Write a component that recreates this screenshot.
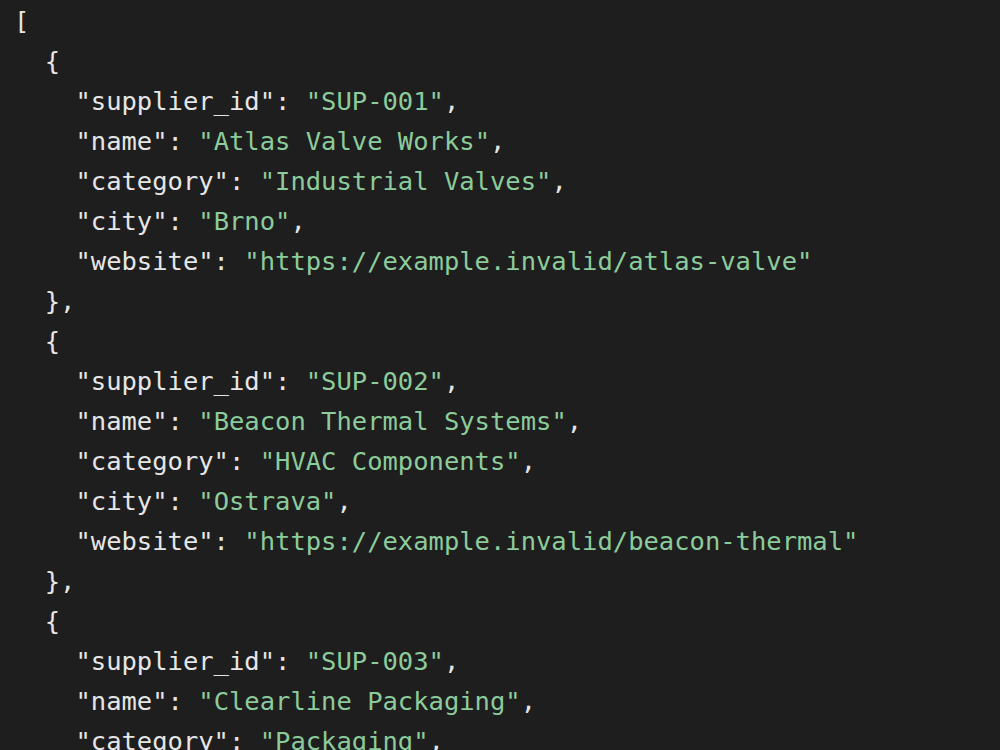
const suppliers = [
  {
    supplier_id: "SUP-001",
    name: "Atlas Valve Works",
    category: "Industrial Valves",
    city: "Brno",
    website: "https://example.invalid/atlas-valve",
  },
  {
    supplier_id: "SUP-002",
    name: "Beacon Thermal Systems",
    category: "HVAC Components",
    city: "Ostrava",
    website: "https://example.invalid/beacon-thermal",
  },
  {
    supplier_id: "SUP-003",
    name: "Clearline Packaging",
    category: "Packaging",
    city: "Plzeň",
    website: "https://example.invalid/clearline",
  },
];

const Line = ({ indent, children }: { indent: number; children: React.ReactNode }) => (
  <div className="whitespace-pre h-[40px] leading-[40px]">
    {"  ".repeat(indent)}
    {children}
  </div>
);

const App = () => {
  return (
    <div
      className="w-[1000px] h-[750px] overflow-hidden bg-[#1e1e1e] text-[#e6e6e6] pl-[14px] pt-[1px] text-[25.5px]"
      style={{ fontFamily: '"DejaVu Sans Mono", "Liberation Mono", monospace' }}
    >
      <Line indent={0}>[</Line>
      {suppliers.map((s, i) => {
        const entries = Object.entries(s);
        return (
          <div key={s.supplier_id}>
            <Line indent={1}>{"{"}</Line>
            {entries.map(([k, v], j) => (
              <Line key={k} indent={2}>
                "{k}": <span className="text-[#8ccb9b]">"{v}"</span>
                {j < entries.length - 1 ? "," : ""}
              </Line>
            ))}
            <Line indent={1}>{i < suppliers.length - 1 ? "}," : "}"}</Line>
          </div>
        );
      })}
      <Line indent={0}>]</Line>
    </div>
  );
};

export default App;
